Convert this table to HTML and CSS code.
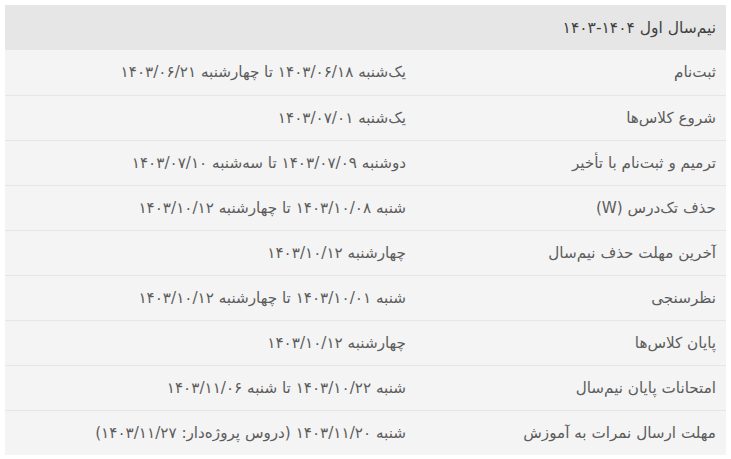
FILE: index.html
```html
<!DOCTYPE html>
<html lang="fa" dir="rtl">
<head>
<meta charset="utf-8">
<link rel="stylesheet" href="styles.css">
</head>
<body>
<table class="cal">
  <thead>
    <tr><th colspan="2">نیم‌سال اول ۱۴۰۴-۱۴۰۳</th></tr>
  </thead>
  <tbody>
    <tr><td class="k">ثبت‌نام</td><td>یک‌شنبه ۱۴۰۳/۰۶/۱۸ تا چهارشنبه ۱۴۰۳/۰۶/۲۱</td></tr>
    <tr><td class="k">شروع کلاس‌ها</td><td>یک‌شنبه ۱۴۰۳/۰۷/۰۱</td></tr>
    <tr><td class="k">ترمیم و ثبت‌نام با تأخیر</td><td>دوشنبه ۱۴۰۳/۰۷/۰۹ تا سه‌شنبه ۱۴۰۳/۰۷/۱۰</td></tr>
    <tr><td class="k">حذف تک‌درس (W)</td><td>شنبه ۱۴۰۳/۱۰/۰۸ تا چهارشنبه ۱۴۰۳/۱۰/۱۲</td></tr>
    <tr><td class="k">آخرین مهلت حذف نیم‌سال</td><td>چهارشنبه ۱۴۰۳/۱۰/۱۲</td></tr>
    <tr><td class="k">نظرسنجی</td><td>شنبه ۱۴۰۳/۱۰/۰۱ تا چهارشنبه ۱۴۰۳/۱۰/۱۲</td></tr>
    <tr><td class="k">پایان کلاس‌ها</td><td>چهارشنبه ۱۴۰۳/۱۰/۱۲</td></tr>
    <tr><td class="k">امتحانات پایان نیم‌سال</td><td>شنبه ۱۴۰۳/۱۰/۲۲ تا شنبه ۱۴۰۳/۱۱/۰۶</td></tr>
    <tr><td class="k">مهلت ارسال نمرات به آموزش</td><td>شنبه ۱۴۰۳/۱۱/۲۰ (دروس پروژه‌دار: ۱۴۰۳/۱۱/۲۷)</td></tr>
  </tbody>
</table>
</body>
</html>
```
FILE: styles.css
```css
html, body {
  margin: 0;
  padding: 0;
  background: #ffffff;
}
body {
  padding: 5px;
  font-family: "DejaVu Sans", "Noto Sans", sans-serif;
  color: #5c5c5c;
}
.cal {
  width: 721px;
  border-collapse: collapse;
  font-size: 15.2px;
}
.cal th {
  background: #e6e6e6;
  color: #3f3f3f;
  font-weight: normal;
  font-size: 15.5px;
  text-align: right;
  height: 45px;
  padding: 0 10px;
  box-sizing: border-box;
}
.cal td {
  background: #f4f4f4;
  text-align: right;
  height: 45px;
  padding: 0 10px;
  border-top: 1px solid #e6e6e6;
  box-sizing: border-box;
}
.cal tbody tr:first-child td {
  border-top: none;
}
.cal td.k {
  width: 310px;
}
```
